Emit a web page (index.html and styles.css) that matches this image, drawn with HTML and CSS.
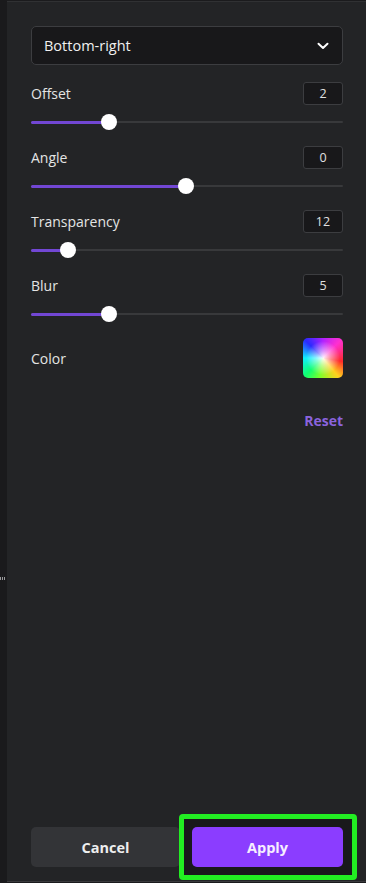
FILE: index.html
```html
<!DOCTYPE html>
<html lang="en">
<head>
<meta charset="utf-8">
<title>Shadow settings</title>
<link rel="stylesheet" href="styles.css">
</head>
<body>
<div class="app">
  <div class="strip"><span class="grip"></span></div>
  <div class="panel">
    <div class="select">
      <span>Bottom-right</span>
      <svg class="chev" width="12" height="8" viewBox="0 0 12 8"><path d="M1.5 1.8 L6 6 L10.5 1.8" fill="none" stroke="#fff" stroke-width="2" stroke-linecap="round" stroke-linejoin="round"/></svg>
    </div>

    <div class="control">
      <div class="head"><span class="label">Offset</span><span class="value">2</span></div>
      <div class="slider"><div class="track"><div class="fill" style="width:78px"></div><div class="thumb" style="left:78px"></div></div></div>
    </div>
    <div class="control">
      <div class="head"><span class="label">Angle</span><span class="value">0</span></div>
      <div class="slider"><div class="track"><div class="fill" style="width:155px"></div><div class="thumb" style="left:155px"></div></div></div>
    </div>
    <div class="control">
      <div class="head"><span class="label">Transparency</span><span class="value">12</span></div>
      <div class="slider"><div class="track"><div class="fill" style="width:37px"></div><div class="thumb" style="left:37px"></div></div></div>
    </div>
    <div class="control">
      <div class="head"><span class="label">Blur</span><span class="value">5</span></div>
      <div class="slider"><div class="track"><div class="fill" style="width:78px"></div><div class="thumb" style="left:78px"></div></div></div>
    </div>

    <div class="color-row">
      <span class="label">Color</span>
      <span class="swatch"></span>
    </div>

    <div class="reset-row"><button class="reset">Reset</button></div>

    <div class="footer">
      <button class="btn cancel">Cancel</button>
      <div class="apply-wrap"><button class="btn apply">Apply</button></div>
    </div>
  </div>
</div>
</body>
</html>
```

FILE: styles.css
```css
* { box-sizing: border-box; }
html, body { margin: 0; padding: 0; }
body {
  background: #1b1b1d;
  font-family: "Open Sans", "Noto Sans", sans-serif;
  color: #e6e6e6;
}
.app {
  display: flex;
  height: 883px;
  overflow: hidden;
}
.strip {
  width: 7px;
  flex: none;
  background: #1a1a1c;
  display: flex;
  flex-direction: column;
  padding-top: 577px;
}
.grip {
  display: block;
  width: 5px;
  height: 3px;
  background: repeating-linear-gradient(90deg, #9a9a9c 0 1px, transparent 1px 2px);
}
.panel {
  flex: 1;
  min-width: 0;
  margin-top: 1px;
  margin-bottom: 1px;
  border-top: 1px solid #303133;
  border-bottom: 1px solid #3a3a3c;
  background: #232426;
  display: flex;
  flex-direction: column;
  padding: 24px 23px 14px 24px;
}
.select {
  height: 39px;
  background: #18181a;
  border: 1px solid #3c3d40;
  border-radius: 5px;
  display: flex;
  align-items: center;
  justify-content: space-between;
  padding: 0 13px 0 12px;
  font-size: 14.5px;
  color: #f0f0f0;
}
.chev { margin-top: 1px; }
.control { margin-top: 17px; }
.control + .control { margin-top: 7px; }
.head {
  height: 23px;
  display: flex;
  align-items: center;
  justify-content: space-between;
}
.label {
  font-size: 14px;
  color: #e4e4e4;
}
.value {
  width: 40px;
  height: 23px;
  background: #18181a;
  border: 1px solid #3c3d40;
  border-radius: 3px;
  font-size: 12.5px;
  color: #e0e0e0;
  display: flex;
  align-items: center;
  justify-content: center;
}
.slider {
  height: 34px;
  display: flex;
  align-items: center;
}
.track {
  position: relative;
  width: 100%;
  height: 2px;
  background: #38393b;
  border-radius: 1px;
}
.fill {
  position: absolute;
  left: 0;
  top: -0.5px;
  height: 3px;
  background: #7247d4;
  border-radius: 2px;
}
.thumb {
  position: absolute;
  top: 1px;
  width: 16px;
  height: 16px;
  margin: -8px 0 0 -8px;
  border-radius: 50%;
  background: #ffffff;
}
.color-row {
  margin-top: 7px;
  height: 40px;
  display: flex;
  align-items: center;
  justify-content: space-between;
}
.swatch {
  width: 40px;
  height: 40px;
  border-radius: 5px;
  background:
    radial-gradient(circle at 50% 50%, rgba(255,255,255,0.95) 0%, rgba(255,255,255,0.5) 25%, rgba(255,255,255,0) 60%),
    conic-gradient(from 0deg, #b020ff 0deg, #ff30d0 45deg, #ff2a2a 100deg, #ffd21e 140deg, #7cff2a 190deg, #10ff70 225deg, #10f0ff 270deg, #2a2aff 315deg, #b020ff 360deg);
}
.reset-row {
  margin-top: 33px;
  display: flex;
  justify-content: flex-end;
}
.reset {
  border: 0;
  background: none;
  padding: 0;
  font-family: inherit;
  font-size: 14px;
  font-weight: 700;
  line-height: 20px;
  color: #8a63dd;
}
.footer {
  margin-top: auto;
  display: grid;
  grid-template-columns: 149px 151px;
  justify-content: space-between;
}
.btn {
  height: 40px;
  width: 100%;
  border: 0;
  border-radius: 5px;
  padding: 0;
  font-family: inherit;
  font-size: 14.5px;
  font-weight: 700;
  cursor: pointer;
}
.cancel {
  background: #333437;
  color: #eeeeee;
}
.apply-wrap {
  position: relative;
  display: flex;
}
.apply-wrap::before {
  content: "";
  position: absolute;
  left: -13px;
  right: -14px;
  top: -13px;
  bottom: -13px;
  border: 5px solid #22ee22;
  border-radius: 4px;
  background: #19191b;
}
.apply {
  position: relative;
  background: #8b3dff;
  color: #f6eeff;
}
```
